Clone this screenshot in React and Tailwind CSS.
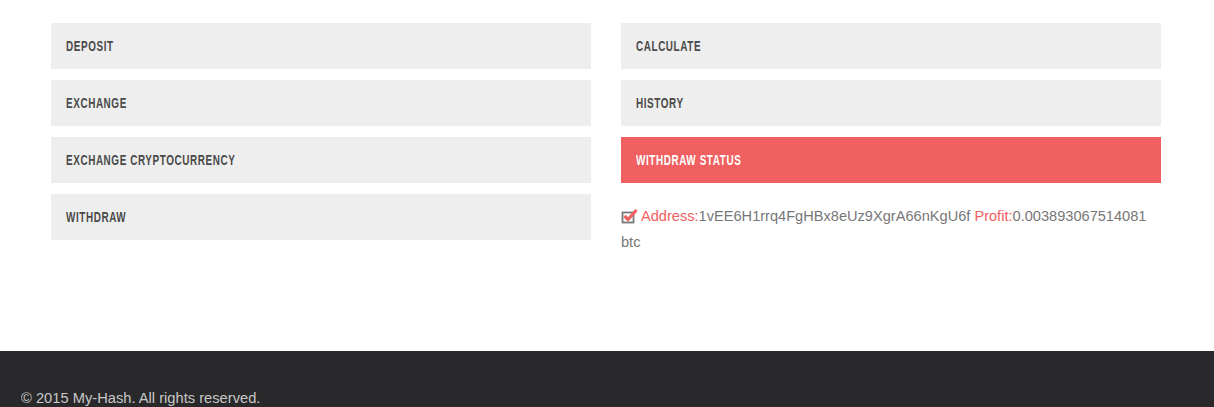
export default function App() {
  const left = ["DEPOSIT", "EXCHANGE", "EXCHANGE CRYPTOCURRENCY", "WITHDRAW"];
  const right = ["CALCULATE", "HISTORY"];
  const head = "h-[46px] flex items-center px-[15px] pb-[2px] overflow-hidden";
  const Label = ({ t }) => (
    <span
      className="inline-block origin-left scale-x-[0.66] text-[15px] font-bold tracking-[0.9px] uppercase whitespace-nowrap leading-none"
      style={{ fontFamily: '"Liberation Sans", Arial, sans-serif' }}
    >
      {t}
    </span>
  );
  return (
    <div className="w-[1214px] bg-white" style={{ fontFamily: '"Liberation Sans", Arial, sans-serif' }}>
      <div className="flex gap-[30px] pl-[51px] pt-[23px] h-[351px]">
        <div className="w-[540px] flex flex-col gap-[11px]">
          {left.map((t) => (
            <div key={t} className={`${head} bg-[#eeeeee] text-[#4a4a4a]`}><Label t={t} /></div>
          ))}
        </div>
        <div className="w-[540px] flex flex-col gap-[11px]">
          {right.map((t) => (
            <div key={t} className={`${head} bg-[#eeeeee] text-[#4a4a4a]`}><Label t={t} /></div>
          ))}
          <div className={`${head} bg-[#f06060] text-white`}><Label t="WITHDRAW STATUS" /></div>
          <div className="text-[14.6px] leading-[26px] text-[#777777] pt-[9px]">
            <svg width="17" height="16" viewBox="0 0 17 16" className="inline-block align-[-3px] mr-[3px]">
              <rect x="1.5" y="4.5" width="11" height="10" fill="none" stroke="#777" strokeWidth="1.8" />
              <path d="M3.5 8 L7 11.5 L15.5 2" fill="none" stroke="#f06060" strokeWidth="3.2" />
            </svg>
            <span className="text-[#f06060]">Address:</span>1vEE6H1rrq4FgHBx8eUz9XgrA66nKgU6f{" "}
            <span className="text-[#f06060]">Profit:</span>0.003893067514081 btc
          </div>
        </div>
      </div>
      <div className="bg-[#29292b] h-[56px] pt-[37px] pl-[21px] text-[14.7px] text-[#c8c8c8] leading-[20px]">
        © 2015 My-Hash. All rights reserved.
      </div>
    </div>
  );
}
